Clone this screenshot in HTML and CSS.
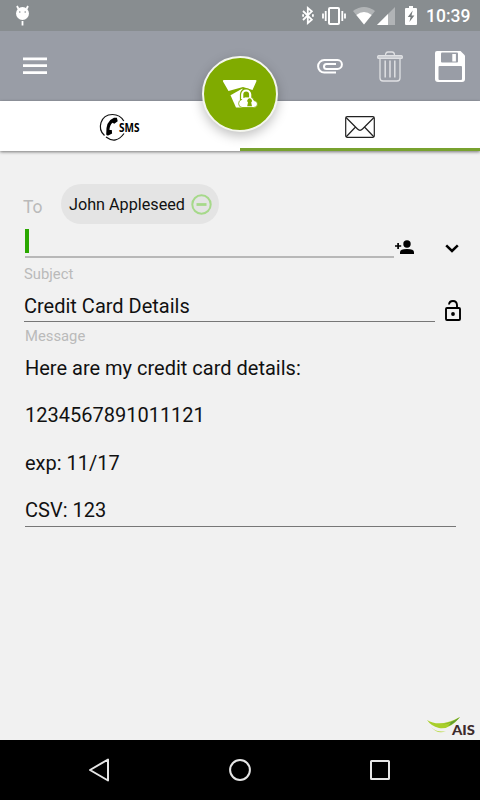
FILE: index.html
```html
<!DOCTYPE html>
<html lang="en">
<head>
    <meta charset="UTF-8">
    <meta name="viewport" content="width=device-width, initial-scale=1.0">
    <title>New message</title>
    <link rel="stylesheet" href="styles.css">
</head>
<body>
    <div class="screen">
        <div class="status-bar">
            <svg class="icon-debug" width="15" height="21" viewBox="0 0 15 21" fill="#fff">
                <circle cx="7.5" cy="8.5" r="6.5"/>
                <path d="M3.5 4 2 1M11.5 4 13 1M7.5 16v4.5" stroke="#fff" stroke-width="1.8"/>
                <circle cx="4.8" cy="7" r=".8" fill="#888d90"/>
                <circle cx="10.2" cy="7" r=".8" fill="#888d90"/>
            </svg>
            <svg class="icon-bluetooth" width="12" height="19" viewBox="0 0 12 19" fill="none" stroke="#fff" stroke-width="1.8">
                <path d="M1 5l8.8 8.7L5.8 17V2L9.8 5.3 1 14"/>
                <path d="M1.1 8.2v2.6M10.9 8.2v2.6"/>
            </svg>
            <svg class="icon-vibrate" width="24" height="18" viewBox="0 0 24 18" fill="none" stroke="#fff" stroke-width="2">
                <rect x="7" y="1" width="10" height="16" rx="1"/>
                <path d="M3.7 4v10M1 6.5v5M20.3 4v10M23 6.5v5" stroke-width="1.8"/>
            </svg>
            <svg class="icon-wifi" width="22" height="18" viewBox="0 0 22 18" fill="#fff">
                <path d="M0 4Q11-4 22 4L11 17.6z" fill-opacity=".35"/>
                <path d="M3.3 8Q11 2 18.7 8L11 17.6z"/>
            </svg>
            <svg class="icon-signal" width="18" height="18" viewBox="0 0 18 18" fill="#fff">
                <path d="M0 18 18 0v18z" fill-opacity=".35"/>
                <path d="M0 18 11 7v11z"/>
            </svg>
            <svg class="icon-battery" width="12" height="19" viewBox="0 0 12 19">
                <path d="M1 2h3V0h4v2h3q1 0 1 1v15q0 1-1 1H1q-1 0-1-1V3q0-1 1-1z" fill="#fff"/>
                <path d="M7.7 4.5 2.8 11h2.8l-1.2 5 5-6.5H6.5z" fill="#777c7e"/>
            </svg>
            <span class="time">10:39</span>
        </div>

        <div class="toolbar">
            <svg class="icon-menu" width="24" height="18" viewBox="0 0 24 18" stroke="#fff" stroke-width="2.7">
                <path d="M0 1.8h24M0 8.7h24M0 15.6h24"/>
            </svg>
            <svg class="icon-attach" width="26" height="15" viewBox="0 0 26 15" fill="none" stroke="#fff" stroke-width="2">
                <path d="M19 13.5H7.3a6.2 6.2 0 0 1 0-12.4h13.2a4.4 4.4 0 0 1 0 8.8H9.5a2.5 2.5 0 0 1 0-5H19"/>
            </svg>
            <svg class="icon-trash" width="26" height="31" viewBox="0 0 26 31" fill="none" stroke="#dfe0e3" stroke-width="1.3">
                <path d="M8.5 4.5Q8.5 1 11 1h4q2.5 0 2.5 3.5"/>
                <rect x=".7" y="4.6" width="24.6" height="2.8" rx="1" fill="#c7cacf"/>
                <path d="M3 8v19q0 3 3 3h14q3 0 3-3V8"/>
                <path d="M8.2 9.5v17M13 9.5v17M17.8 9.5v17" stroke-width="1.5"/>
            </svg>
            <svg class="icon-save" width="30" height="31" viewBox="0 0 30 31">
                <path d="M2 0h23.5L30 4.5V28q0 3-3 3H3q-3 0-3-3V2q0-2 2-2z" fill="#fff"/>
                <rect x="6" y="1.5" width="17" height="10" rx="1" fill="#999da6"/>
                <rect x="17.3" y="3" width="3.6" height="7.5" fill="#fff"/>
                <rect x="3.5" y="15" width="23.5" height="14" rx="1" fill="#999da6"/>
            </svg>
        </div>

        <div class="tabs">
            <div class="tab">
                <svg class="icon-sms" width="46" height="28" viewBox="-2 0 46 28">
                    <path d="M5.5 22.5C-2 16 1 1.7 13.5 1.5Q21 1.5 24.8 8M7 24Q17 31.5 25 20.5" fill="none" stroke="#111" stroke-width="1.2"/>
                    <path d="M15 4.8Q6.5 8 7.2 21.5q1 1.7 2.5.8l3.4-1.8-.3-3.6-2.3.2Q10.7 12 13.5 9.8l1.8 1 3.4-2.5-.8-3.5z"/>
                    <text x="20" y="19" textLength="20.5" lengthAdjust="spacingAndGlyphs">SMS</text>
                </svg>
            </div>
            <div class="tab active">
                <svg class="icon-mail" width="30" height="22" viewBox="0 0 30 22" fill="none" stroke="#222" stroke-width="1.2">
                    <rect x=".7" y=".7" width="28.6" height="20.6" rx="1.5"/>
                    <path d="M1 1.5 12.5 13q2.5 2.5 5 0L29 1.5M1 21 10.5 11M29 21 19.5 11"/>
                </svg>
            </div>
        </div>

        <!-- Send button, floats over the toolbar and the tabs -->
        <div class="send-button">
            <svg width="36" height="30" viewBox="0 0 36 30" fill="#fff">
                <path d="M2 1h31.5q1.5 0 .8 1.5L30.5 11 21 8 6.5 12 1 2.5Q.5 1 2 1z"/>
                <path d="M8.500 16.200 20.500 9.600V28.500H14z"/>
                <path d="M20.200 21v-5.500a4 4 0 0 1 8 0V21" fill="none" stroke="#80ab00" stroke-width="4.600"/>
                <path d="M20 28.500a4 4 0 0 1-.5-7.800q.5-2.700 4-2.700h4q4 0 4.500 3.500 3.500.5 3.500 3.500 0 3.500-4 3.500z" stroke="#80ab00" stroke-width=".8"/>
                <path d="M20.200 20v-4.500a4 4 0 0 1 8 0V19" fill="none" stroke="#fff" stroke-width="2.200"/>
                <path d="M26 23.600a2.400 2.400 0 1 1 3.200 0l.8 3.600h-4.800z" fill="#80ab00"/>
            </svg>
        </div>

        <div class="compose">
            <div class="to-row">
                <span class="label-to">To</span>
                <div class="chip">
                    <span>John Appleseed</span>
                    <svg width="21" height="21" viewBox="0 0 21 21" fill="none" stroke="#a6d98a">
                        <circle cx="10.5" cy="10.5" r="9.2" stroke-width="2"/>
                        <path d="M5.5 10.5h10" stroke-width="2.8"/>
                    </svg>
                </div>
            </div>
            <div class="recipient-row">
                <div class="recipient-field"><span class="cursor"></span></div>
                <svg class="icon-add-person" width="19" height="15" viewBox="0 0 19 15">
                    <circle cx="12" cy="4" r="3.7"/>
                    <path d="M5 14v-1.8q0-3.2 7-3.2t7 3.2V14z"/>
                    <path d="M0 6h6.2M3.1 2.9v6.2" stroke="#000" stroke-width="1.7"/>
                </svg>
                <svg class="icon-expand" width="14" height="9" viewBox="0 0 14 9" fill="none" stroke="#000" stroke-width="2.5">
                    <path d="M1.2 1.4 7 7l5.8-5.6"/>
                </svg>
            </div>
            <div class="label-subject">Subject</div>
            <div class="subject-row">
                <div class="subject-field">Credit Card Details</div>
                <svg class="icon-lock" width="16" height="21" viewBox="0 0 16 21" fill="none" stroke="#000" stroke-width="1.9">
                    <rect x="1" y="8" width="14" height="12" rx="1"/>
                    <path d="M4 4.5Q4.3 1 8 1t4 4v3"/>
                    <circle cx="8" cy="14" r="1.9" fill="#000" stroke="none"/>
                </svg>
            </div>
            <div class="label-message">Message</div>
            <div class="message-field">Here are my credit card details:

1234567891011121

exp: 11/17

CSV: 123</div>
            <svg class="logo" width="49" height="22" viewBox="0 0 49 22">
                <path d="M0 4Q13 12 33 1 23 14 12 12 4 10 0 4z" fill="#a9cf2b"/>
                <path d="M15 8.5Q24 7 33 1 27 8 21 10 23 8 24 6.5 20 8 15 8.5z" fill="#609b32"/>
                <path d="M4 11Q10 17 19 15 11 19 4 11z" fill="#b5d93a"/>
                <text x="25" y="18.5" textLength="23" lengthAdjust="spacingAndGlyphs">AIS</text>
            </svg>
        </div>

        <div class="nav-bar">
            <svg width="22" height="26" viewBox="0 0 22 26"><path d="M2 13 20 2.5v21z"/></svg>
            <svg width="22" height="22" viewBox="0 0 22 22"><circle cx="11" cy="11" r="9.9"/></svg>
            <svg width="20" height="20" viewBox="0 0 20 20"><rect x="1" y="1" width="18" height="18" rx=".5"/></svg>
        </div>
    </div>
</body>
</html>
```

FILE: styles.css
```css
* {
    box-sizing: border-box;
}
body {
    margin: 0;
    font-family: Roboto, "Liberation Sans", sans-serif;
    background-color: #f1f1f1;
    color: #111;
}
svg {
    display: block;
    flex: none;
    overflow: visible;
}
.screen {
    position: relative;
    display: flex;
    flex-direction: column;
    width: 480px;
    height: 800px;
    overflow: hidden;
}

/* status bar */
.status-bar {
    display: flex;
    height: 31px;
    padding-left: 15px;
    background-color: #888d90;
}
.icon-debug {
    margin-top: 5px;
}
.icon-bluetooth {
    margin: 6px 0 0 272px;
}
.icon-vibrate {
    margin: 7px 0 0 8px;
}
.icon-wifi {
    margin: 7px 0 0 7px;
}
.icon-signal {
    margin: 7px 0 0 2px;
}
.icon-battery {
    margin: 6px 0 0 10px;
}
.time {
    margin: 6px 0 0 9px;
    font-size: 17.5px;
    font-weight: 500;
    line-height: 21px;
    color: #fff;
}

/* toolbar */
.toolbar {
    display: flex;
    height: 70px;
    padding-left: 23px;
    background-color: #999da6;
}
.icon-menu {
    margin-top: 26px;
}
.icon-attach {
    margin: 28px 0 0 270px;
}
.icon-trash {
    margin: 20px 0 0 34px;
}
.icon-save {
    margin: 20px 0 0 32px;
}

/* tabs */
.tabs {
    display: flex;
    height: 50px;
    background-color: #fff;
    box-shadow: 0 1px 3px rgba(0, 0, 0, 0.5);
}
.tab {
    display: flex;
    flex: 1;
    justify-content: center;
    padding-top: 12px;
    border-bottom: 3px solid #fff;
}
.tab.active {
    padding-top: 15px;
    border-bottom-color: #78a22f;
}
.icon-sms text {
    font-family: "Open Sans", sans-serif;
    font-size: 12px;
    font-weight: bold;
}
.send-button {
    position: absolute;
    top: 56px;
    left: 202px;
    display: flex;
    align-items: center;
    justify-content: center;
    width: 76px;
    height: 76px;
    border: 2px solid #f4f6ee;
    border-radius: 50%;
    background-color: #80ab00;
    box-shadow: 0 4px 12px rgba(0, 0, 0, 0.25);
}

/* message form */
.compose {
    flex: 1;
    padding: 33px 0 0 23px;
}
.to-row {
    display: flex;
    height: 40px;
}
.label-to {
    width: 38px;
    padding-top: 13px;
    font-size: 17.5px;
    line-height: 21px;
    color: #bababa;
}
.chip {
    display: flex;
    align-items: center;
    justify-content: space-between;
    width: 158px;
    padding: 0 7px 0 8px;
    border-radius: 20px;
    background-color: #e4e4e4;
    font-size: 16.2px;
}
.recipient-row {
    display: flex;
    height: 34px;
    padding-left: 2px;
}
.recipient-field {
    width: 369px;
    padding-top: 5px;
    border-bottom: 2px solid #b8b8b8;
}
.cursor {
    display: block;
    width: 4px;
    height: 24px;
    background-color: #2aa800;
}
.icon-add-person {
    margin: 16px 0 0 1px;
}
.icon-expand {
    margin: 20px 0 0 31px;
}
.label-subject, .label-message {
    font-size: 14.8px;
    line-height: 18px;
    color: #bababa;
}
.label-subject {
    padding: 7px 0 0 1px;
}
.subject-row {
    display: flex;
    height: 39px;
    padding-left: 1px;
}
.subject-field {
    width: 411px;
    padding-top: 11px;
    border-bottom: 1px solid #777;
    font-size: 20px;
    line-height: 24px;
}
.icon-lock {
    margin: 17px 0 0 10px;
}
.label-message {
    padding: 5px 0 0 2px;
}
.message-field {
    width: 431px;
    height: 182px;
    margin-left: 2px;
    padding-top: 12px;
    border-bottom: 1px solid #777;
    font-size: 20px;
    line-height: 23.7px;
    white-space: pre-line;
}
.logo {
    margin: 189px 0 0 404px;
}
.logo text {
    font-family: Lato, sans-serif;
    font-size: 13px;
    font-weight: 900;
    fill: #3d2a2b;
}

/* android navigation */
.nav-bar {
    display: flex;
    align-items: center;
    justify-content: space-between;
    height: 60px;
    padding: 0 90px 0 88px;
    background-color: #000;
}
.nav-bar svg {
    fill: none;
    stroke: #e6e6e6;
    stroke-width: 2;
    stroke-linejoin: round;
}
```
